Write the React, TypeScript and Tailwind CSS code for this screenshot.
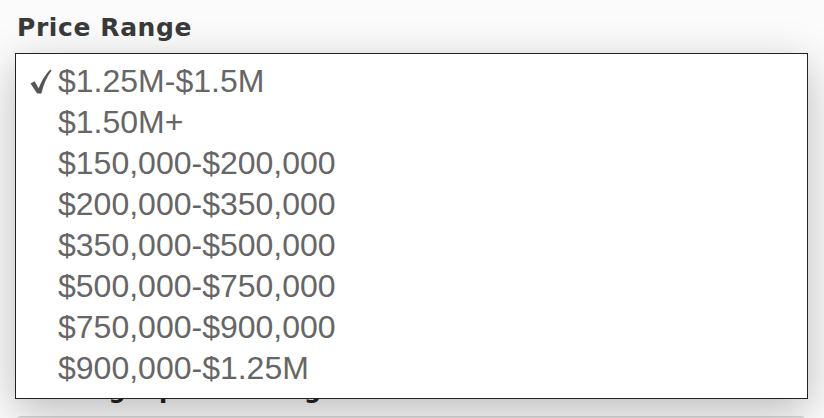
import React from "react";

const options = [
  "$1.25M-$1.5M",
  "$1.50M+",
  "$150,000-$200,000",
  "$200,000-$350,000",
  "$350,000-$500,000",
  "$500,000-$750,000",
  "$750,000-$900,000",
  "$900,000-$1.25M",
];

function Check() {
  return (
    <svg width="22" height="25" viewBox="0 0 22 25" className="block">
      <path
        d="M0.5 14.5 L4.6 12.2 L8.6 19.2 C11.4 12.4 15.4 5.4 20.2 0.6 L21.6 1.6 C17 7.4 13.6 15.4 11.4 24.6 L7.2 24.6 Z"
        fill="#555"
      />
    </svg>
  );
}

export default function App() {
  return (
    <div className="relative h-[418px] w-[824px] overflow-hidden bg-[#fbfbfb]">
      <div className="px-[17px] pt-[10px]">
        <h2
          className="text-[25px] leading-[36px] font-bold tracking-[0.6px] text-[#3a3a3a]"
          style={{ fontFamily: "'DejaVu Sans', 'Liberation Sans', sans-serif" }}
        >
          Price Range
        </h2>
        <div className="mt-[326px] flex flex-col">
          <h2
            className="pl-[14px] text-[24px] leading-[36px] font-bold tracking-[2.6px] text-[#222]"
            style={{ fontFamily: "'DejaVu Sans', 'Liberation Sans', sans-serif" }}
          >
            Living Space Range
          </h2>
          <div className="mt-[8px] h-[40px] w-[788px] rounded-sm border-t border-[#d4d4d4] bg-[#e8e8e8]" />
        </div>
      </div>

      <div className="absolute left-[15px] top-[53px] h-[346px] w-[793px] border border-[#222] bg-white pt-[7px] shadow-[0_12px_40px_rgba(0,0,0,0.25)]">
        <ul
          className="flex flex-col text-[32px] leading-[41px] text-[#666]"
          style={{ fontFamily: "'Liberation Sans', Arial, sans-serif" }}
        >
          {options.map((o, i) => (
            <li key={o} className="flex h-[41px] items-center">
              <span className="flex w-[42px] justify-end pr-[6px]">
                {i === 0 ? <Check /> : null}
              </span>
              <span>{o}</span>
            </li>
          ))}
        </ul>
      </div>
    </div>
  );
}
